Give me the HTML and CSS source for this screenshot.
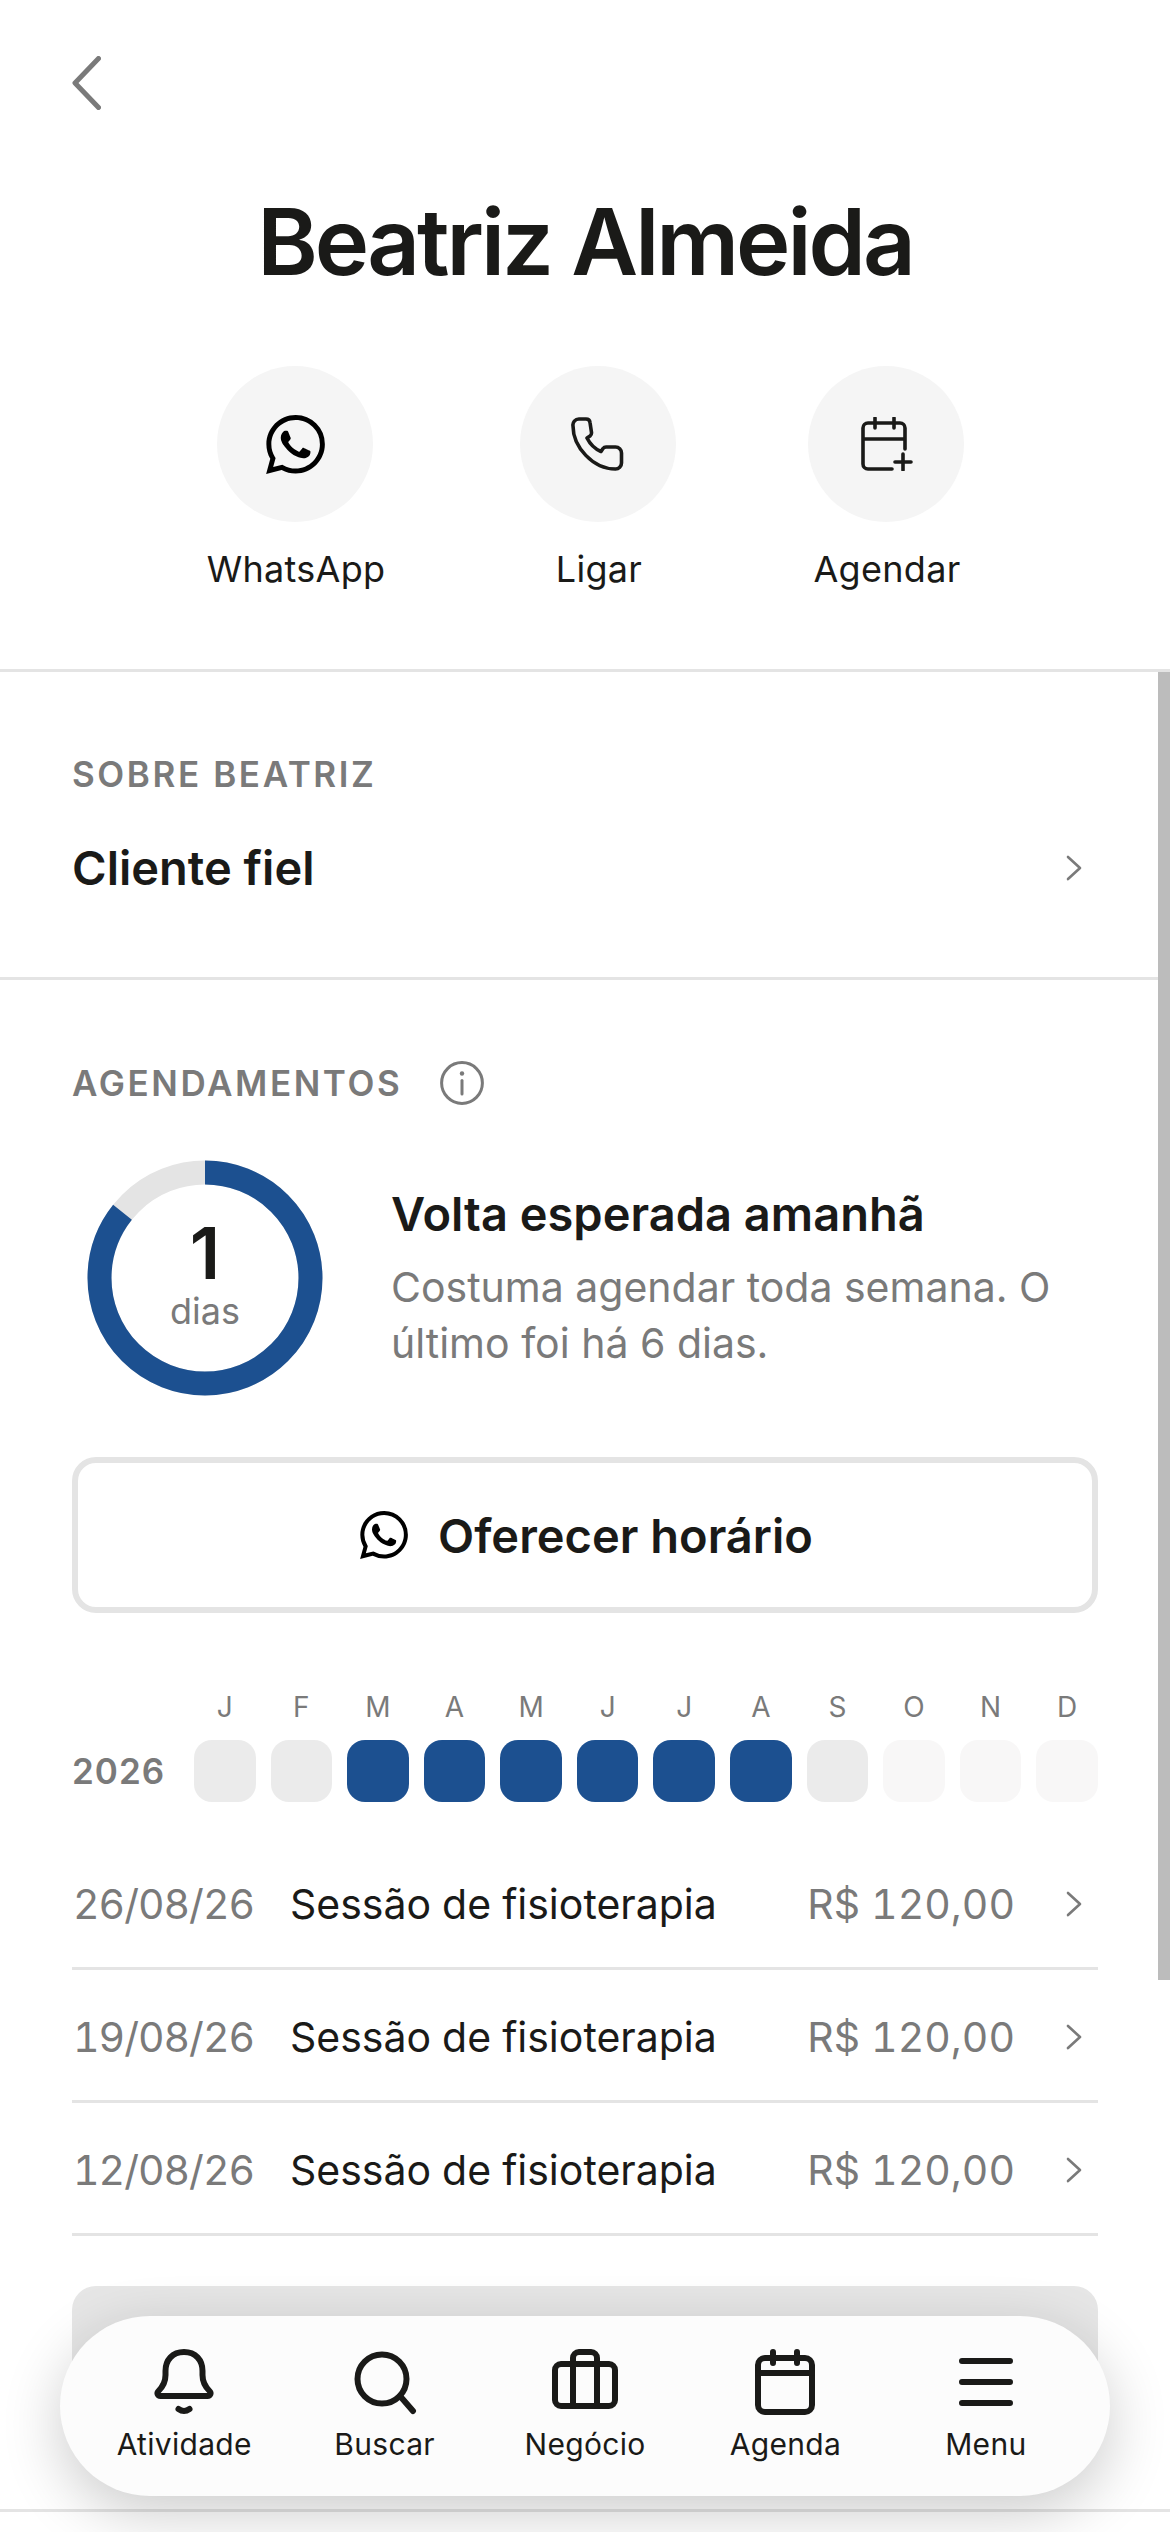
FILE: index.html
```html
<!DOCTYPE html>
<html lang="en">
<head>
  <meta charset="UTF-8">
  <title>Beatriz Almeida</title>
  <link rel="stylesheet" href="styles.css">
</head>
<body>
<svg class="defs" width="0" height="0">
  <symbol id="wa" viewBox="0 0 24 24">
    <path d="M17.472 14.382c-.297-.149-1.758-.867-2.03-.967-.273-.099-.471-.148-.67.15-.197.297-.767.966-.94 1.164-.173.199-.347.223-.644.075-.297-.15-1.255-.463-2.39-1.475-.883-.788-1.48-1.761-1.653-2.059-.173-.297-.018-.458.13-.606.134-.133.298-.347.446-.52.149-.174.198-.298.298-.497.099-.198.05-.371-.025-.52-.075-.149-.669-1.612-.916-2.207-.242-.579-.487-.5-.669-.51-.173-.008-.371-.01-.57-.01-.198 0-.52.074-.792.372-.272.297-1.04 1.016-1.04 2.479 0 1.462 1.065 2.875 1.213 3.074.149.198 2.096 3.2 5.077 4.487.709.306 1.262.489 1.694.625.712.227 1.36.195 1.871.118.571-.085 1.758-.719 2.006-1.413.248-.694.248-1.289.173-1.413-.074-.124-.272-.198-.57-.347m-5.421 7.403h-.004a9.87 9.87 0 01-5.031-1.378l-.361-.214-3.741.982.998-3.648-.235-.374a9.86 9.86 0 01-1.51-5.26c.001-5.45 4.436-9.884 9.888-9.884 2.64 0 5.122 1.03 6.988 2.898a9.825 9.825 0 012.893 6.994c-.003 5.45-4.437 9.884-9.885 9.884m8.413-18.297A11.815 11.815 0 0012.05 0C5.495 0 .16 5.335.157 11.892c0 2.096.547 4.142 1.588 5.945L.057 24l6.305-1.654a11.882 11.882 0 005.683 1.448h.005c6.554 0 11.89-5.335 11.893-11.893a11.821 11.821 0 00-3.48-8.413Z"/>
  </symbol>
  <symbol id="chev" viewBox="0 0 16 26">
    <path d="M2 2l12 11L2 24" fill="none" stroke="#7a7a7a" stroke-width="2.6" stroke-linecap="round" stroke-linejoin="round"/>
  </symbol>
</svg>

<header class="top">
  <svg class="back" viewBox="0 0 29 54"><path d="M26.5 2.500L3 27l23.5 24.500" fill="none" stroke="#7a7a7a" stroke-width="5" stroke-linecap="round" stroke-linejoin="round"/></svg>
  <h1 class="name">Beatriz Almeida</h1>
  <div class="actions">
    <div class="action">
      <span class="action-circle"><svg class="wa-big"><use href="#wa"/></svg></span>
      <span class="action-label">WhatsApp</span>
    </div>
    <div class="action">
      <span class="action-circle">
        <svg class="ico-54" viewBox="0 0 54 54"><path d="M8 2h7a4 4 0 0 1 4 3.500l1.500 10a4 4 0 0 1-1.500 3.500l-3 2c3 6 8 11 14 13.500l2-3a4 4 0 0 1 3.500-1.500h9a6 6 0 0 1 6 6v10a6 6 0 0 1-6 6C22 52 2 30 2 9a6 6 0 0 1 6-7z" fill="none" stroke="#1a1a18" stroke-width="3.6" stroke-linejoin="round"/></svg>
      </span>
      <span class="action-label">Ligar</span>
    </div>
    <div class="action">
      <span class="action-circle">
        <svg class="ico-54" viewBox="0 0 54 54"><path d="M33 52H9a5 5 0 0 1-5-5V11a5 5 0 0 1 5-5h32a5 5 0 0 1 5 5v21M4 22h42M16 1v10M35 1v10M44 37v16M36 45h16" fill="none" stroke="#1a1a18" stroke-width="3.6" stroke-linecap="round"/></svg>
      </span>
      <span class="action-label">Agendar</span>
    </div>
  </div>
</header>

<section class="about">
  <div class="caption">SOBRE BEATRIZ</div>
  <div class="about-row">
    <span class="about-text">Cliente fiel</span>
    <svg class="chev"><use href="#chev"/></svg>
  </div>
</section>

<section class="bookings">
  <div class="caption-row">
    <span class="caption">AGENDAMENTOS</span>
    <svg class="info" viewBox="0 0 44 44">
      <circle cx="22" cy="22" r="20.400" fill="none" stroke="#7a7a7a" stroke-width="3"/>
      <path d="M22 19.500V33" stroke="#7a7a7a" stroke-width="3" stroke-linecap="round"/>
      <circle cx="22" cy="12.500" r="2.200" fill="#7a7a7a"/>
    </svg>
  </div>

  <div class="expect">
    <div class="ring">
      <svg class="ring-svg" viewBox="0 0 236 236">
        <circle cx="118" cy="118" r="105.500" fill="none" stroke="#e4e4e4" stroke-width="24"/>
        <circle cx="118" cy="118" r="105.500" fill="none" stroke="#1c5090" stroke-width="24" pathLength="7" stroke-dasharray="6 1" transform="rotate(-90 118 118)"/>
      </svg>
      <div class="ring-num">1</div>
      <div class="ring-unit">dias</div>
    </div>
    <div class="expect-text">
      <div class="expect-title">Volta esperada amanhã</div>
      <div class="expect-body">Costuma agendar toda semana. O último foi há 6 dias.</div>
    </div>
  </div>

  <div class="offer">
    <svg class="wa-small"><use href="#wa"/></svg>
    <span>Oferecer horário</span>
  </div>

  <div class="year">
    <div class="year-label"></div>
    <div class="months">
      <span>J</span><span>F</span><span>M</span><span>A</span><span>M</span><span>J</span><span>J</span><span>A</span><span>S</span><span>O</span><span>N</span><span>D</span>
    </div>
    <div class="year-label">2026</div>
    <div class="cells">
      <i class="past"></i><i class="past"></i><i class="on"></i><i class="on"></i><i class="on"></i><i class="on"></i><i class="on"></i><i class="on"></i><i class="past"></i><i class="future"></i><i class="future"></i><i class="future"></i>
    </div>
  </div>

  <div class="visit">
    <span class="visit-date">26/08/26</span>
    <span class="visit-name">Sessão de fisioterapia</span>
    <span class="visit-price">R$ 120,00</span>
    <svg class="chev"><use href="#chev"/></svg>
  </div>
  <div class="visit">
    <span class="visit-date">19/08/26</span>
    <span class="visit-name">Sessão de fisioterapia</span>
    <span class="visit-price">R$ 120,00</span>
    <svg class="chev"><use href="#chev"/></svg>
  </div>
  <div class="visit">
    <span class="visit-date">12/08/26</span>
    <span class="visit-name">Sessão de fisioterapia</span>
    <span class="visit-price">R$ 120,00</span>
    <svg class="chev"><use href="#chev"/></svg>
  </div>

  <div class="more-card"></div>
</section>

<div class="scrollbar"></div>

<nav class="tabbar">
  <div class="tab">
    <svg class="tab-ico" viewBox="-3.5 0 66 66"><path d="M29.500 3C18 3 11 11 11 22v4c0 7-3 12-7 16-2 2-1 5 2 5h47c3 0 4-3 2-5-4-4-7-9-7-16v-4C48 11 41 3 29.500 3z"/><path d="M24 60q5.500 4 11 0"/></svg>
    <span>Atividade</span>
  </div>
  <div class="tab">
    <svg class="tab-ico" viewBox="-3 -3 66 66"><circle cx="27" cy="27" r="24.500"/><path d="M45 44l13 15"/></svg>
    <span>Buscar</span>
  </div>
  <div class="tab">
    <svg class="tab-ico" viewBox="0 0 66 66"><rect x="3" y="15" width="60" height="42" rx="6"/><path d="M21 57V9a6 6 0 0 1 6-6h12a6 6 0 0 1 6 6v48"/></svg>
    <span>Negócio</span>
  </div>
  <div class="tab">
    <svg class="tab-ico" viewBox="-3 0 66 66"><rect x="3" y="9" width="54" height="54" rx="7"/><path d="M3 24h54M18 3v11M42 3v11"/></svg>
    <span>Agenda</span>
  </div>
  <div class="tab">
    <svg class="tab-ico" viewBox="-6 0 66 66"><path d="M3 12h48M3 33h48M3 54h48"/></svg>
    <span>Menu</span>
  </div>
</nav>
</body>
</html>
```

FILE: styles.css
```css
* {
  box-sizing: border-box;
}
html, body {
  margin: 0;
  height: 2532px;
  overflow: hidden;
}
body {
  position: relative;
  font-family: Inter, "Liberation Sans", sans-serif;
  color: #1a1a18;
  background: #fff;
}
.defs {
  position: absolute;
}

/* header */
.top {
  height: 672px;
  padding-top: 56px;
  border-bottom: 3px solid #e4e4e4;
}
.back {
  display: block;
  width: 29px;
  height: 54px;
  margin-left: 72px;
}
.name {
  margin: 82px 0 0;
  font-size: 92px;
  line-height: 100px;
  font-weight: 600;
  letter-spacing: -3px;
  text-align: center;
}
.actions {
  display: flex;
  margin-top: 74px;
  padding-left: 151px;
}
.action {
  width: 288px;
  display: flex;
  flex-direction: column;
  align-items: center;
}
.action:first-child {
  margin-right: 15px;
}
.action-circle {
  width: 156px;
  height: 156px;
  border-radius: 50%;
  background: #f5f5f5;
  display: flex;
  align-items: center;
  justify-content: center;
}
.wa-big {
  width: 59px;
  height: 59px;
}
.ico-54 {
  width: 54px;
  height: 54px;
}
.action-label {
  margin-top: 25px;
  padding-left: 2px;
  font-size: 36px;
  line-height: 44px;
  letter-spacing: 0.3px;
}

/* sobre */
.about {
  height: 308px;
  padding: 82px 72px 0;
  border-bottom: 3px solid #e4e4e4;
}
.caption {
  font-size: 35px;
  line-height: 40px;
  font-weight: 600;
  letter-spacing: 2.6px;
  color: #7a7a7a;
}
.about-row {
  display: flex;
  align-items: center;
  justify-content: space-between;
  margin-top: 46px;
  padding-right: 16px;
}
.about-text {
  font-size: 47px;
  line-height: 56px;
  font-weight: 600;
}
.chev {
  display: block;
  width: 16px;
  height: 26px;
  flex: none;
}

/* agendamentos */
.bookings {
  height: 1532px;
  padding: 81px 72px 0;
  border-bottom: 3px solid #e4e4e4;
}
.caption-row {
  display: flex;
  align-items: center;
  gap: 38px;
  height: 44px;
}
.info {
  width: 44px;
  height: 44px;
  flex: none;
}
.expect {
  display: flex;
  align-items: center;
  margin-top: 55px;
  padding-left: 15px;
}
.ring {
  position: relative;
  width: 236px;
  height: 236px;
  flex: none;
  margin-right: 68px;
  text-align: center;
}
.ring-svg {
  position: absolute;
  left: 0;
  top: 0;
  width: 236px;
  height: 236px;
}
.ring-num {
  position: relative;
  padding-top: 51px;
  font-size: 72px;
  line-height: 84px;
  font-weight: 600;
}
.ring-unit {
  position: relative;
  margin-top: -4px;
  font-size: 36px;
  line-height: 40px;
  color: #7a7a7a;
}
.expect-title {
  font-size: 47px;
  line-height: 56px;
  font-weight: 600;
}
.expect-body {
  margin-top: 17px;
  font-size: 41px;
  line-height: 56px;
  color: #7a7a7a;
}
.offer {
  display: flex;
  align-items: center;
  justify-content: center;
  gap: 30px;
  height: 156px;
  margin-top: 61px;
  padding-left: 3px;
  border: 6px solid #e4e4e4;
  border-radius: 24px;
  font-size: 47px;
  font-weight: 600;
}
.wa-small {
  width: 48px;
  height: 48px;
}

/* calendario */
.year {
  display: grid;
  grid-template-columns: 122px 1fr;
  align-items: center;
  row-gap: 16px;
  margin-top: 77px;
}
.year-label {
  font-size: 35px;
  font-weight: 600;
  letter-spacing: 1px;
  color: #7a7a7a;
}
.months, .cells {
  display: grid;
  grid-template-columns: repeat(12, 1fr);
  column-gap: 15px;
}
.months span {
  font-size: 28px;
  line-height: 34px;
  text-align: center;
  color: #7a7a7a;
}
.cells i {
  display: block;
  height: 62px;
  border-radius: 18px;
}
.cells .past {
  background: #ebebeb;
}
.cells .on {
  background: #1c5090;
}
.cells .future {
  background: #f8f7f7;
}

/* lista */
.visit {
  display: flex;
  align-items: center;
  height: 133px;
  padding: 3px 16px 0 0;
  border-bottom: 3px solid #e4e4e4;
  font-size: 41px;
  font-variant-numeric: tabular-nums;
}
.year + .visit {
  margin-top: 35px;
}
.visit-date {
  width: 218px;
  padding-left: 1px;
  letter-spacing: -1px;
  color: #7a7a7a;
}
.visit-name {
  flex: 1;
}
.visit-price {
  margin-right: 51px;
  color: #7a7a7a;
}
.more-card {
  height: 134px;
  margin-top: 50px;
  border-radius: 24px;
  background: #e6e6e6;
}

/* sobrepostos */
.scrollbar {
  position: absolute;
  right: 0;
  top: 672px;
  width: 12px;
  height: 1308px;
  background: #bcbcbc;
}
.tabbar {
  position: absolute;
  left: 60px;
  top: 2316px;
  width: 1050px;
  height: 180px;
  display: flex;
  padding: 33px 24px 0;
  border-radius: 90px;
  background: #fcfcfc;
  box-shadow: 0 18px 60px rgba(0, 0, 0, 0.2);
}
.tab {
  flex: 1;
  display: flex;
  flex-direction: column;
  align-items: center;
  font-size: 30px;
  line-height: 36px;
  letter-spacing: 0.3px;
}
.tab span {
  margin-top: 11px;
}
.tab-ico {
  width: 66px;
  height: 66px;
  fill: none;
  stroke: #1a1a18;
  stroke-width: 6;
  stroke-linecap: round;
  stroke-linejoin: round;
}
```
